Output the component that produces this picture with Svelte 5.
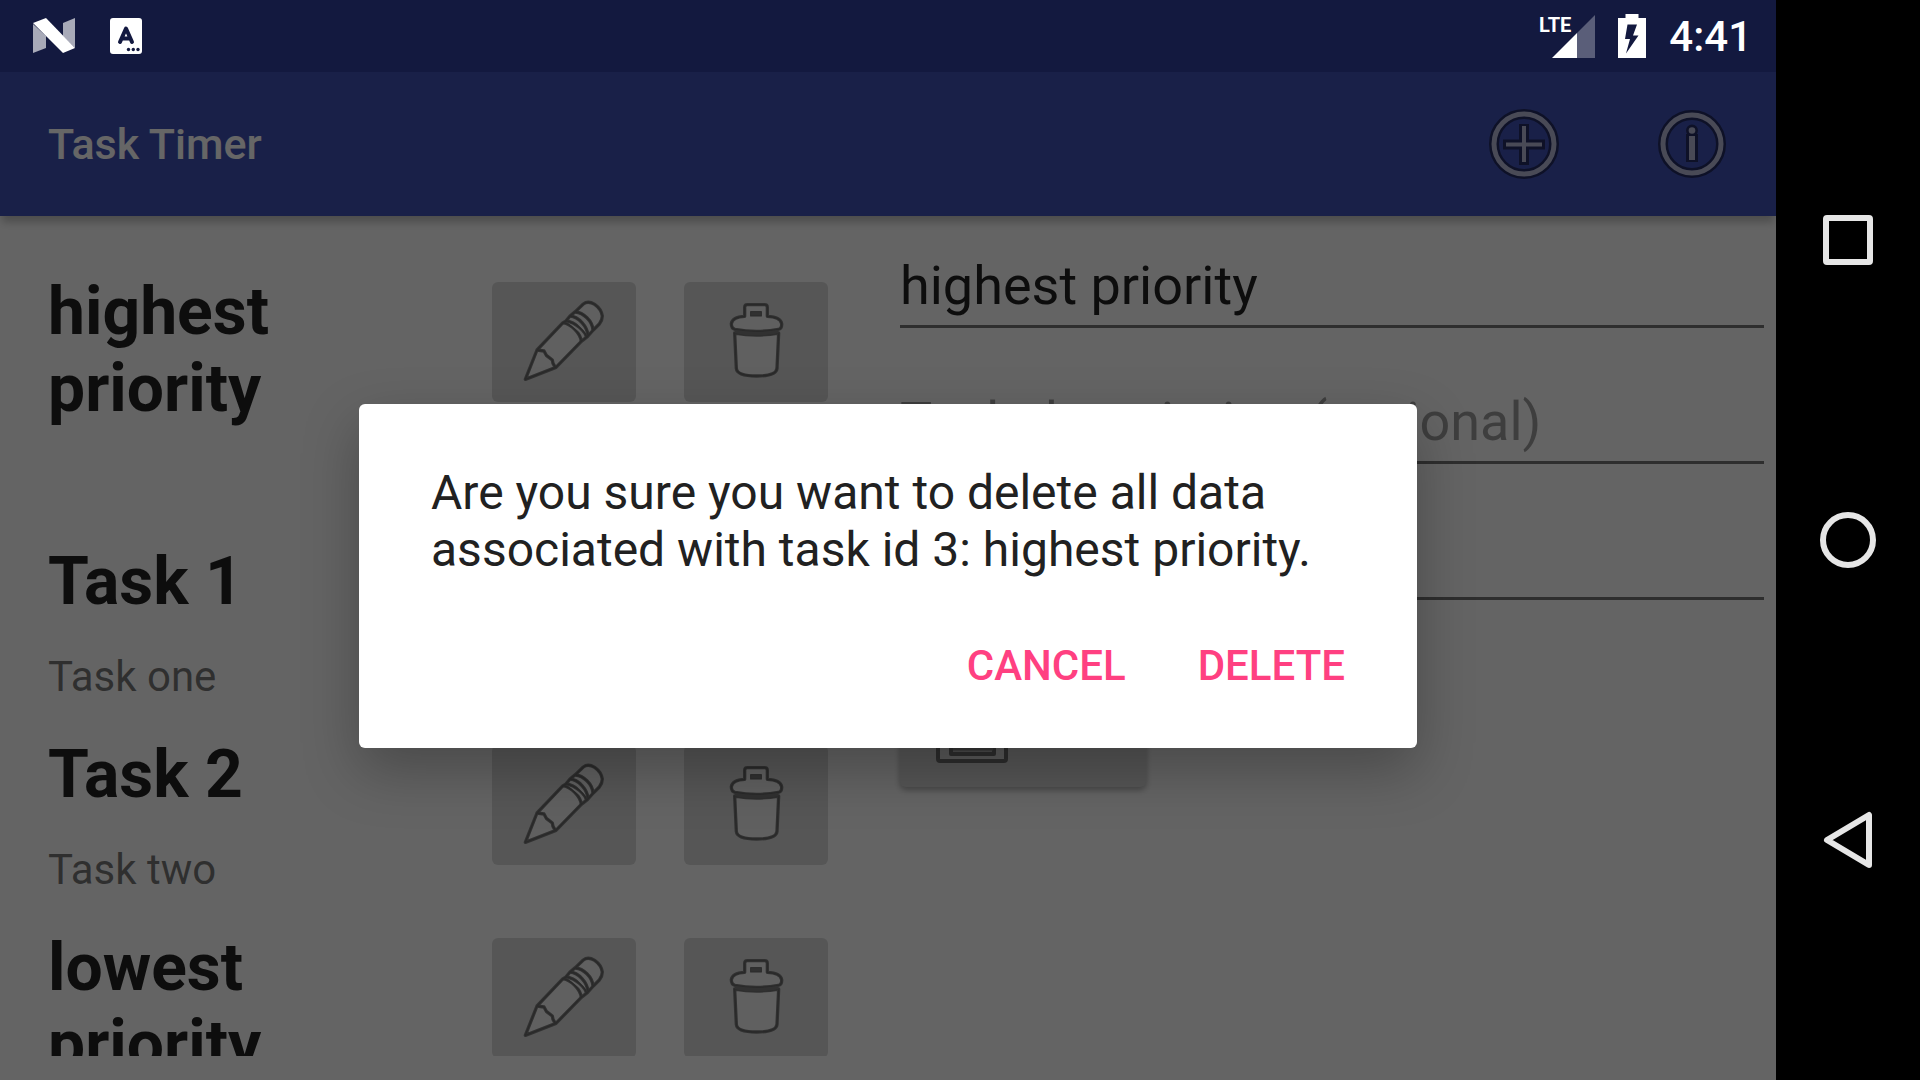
<script>
  const tasks = [
    { name: 'highest priority', description: '' },
    { name: 'Task 1', description: 'Task one' },
    { name: 'Task 2', description: 'Task two' },
    { name: 'lowest priority', description: '' }
  ];

  let name = $state('highest priority');
  let description = $state('');
  let sortOrder = $state('');

  const pencil = [
    'M166 358 201 270 279 188 287 184 300 168 316 155 340 132Q354 121 374 133 394 147 397 168 397 180 388 192L370 210 352 230 334 244 258 322Z',
    'M279 188C305 193 331 220 334 244',
    'M287 182C318 188 347 214 350 234',
    'M300 168C326 170 352 200 354 226',
    'M316 156C340 158 367 182 369 210',
    'M201 270 222 273 229 286 247 300 249 310 256 322'
  ];
  const bin = [
    'M794 219 799 325Q801 348 860 348 919 348 921 325L926 219Q860 231 794 219Z',
    'M784 191Q787 171 824 169V142Q824 134 832 134H884Q892 134 892 142V169Q932 171 935 191 936 207 925 208 860 220 795 208 784 205 784 191Z'
  ];
</script>

{#snippet outlined(paths, viewBox)}
  <svg class="row-icon" {viewBox} aria-hidden="true">
    {#each paths as d}
      <path {d} fill="#f1f1f1" stroke="#7c7c7c" stroke-width="10" stroke-linejoin="round" />
    {/each}
    {#each paths as d}
      <path {d} fill="none" stroke="#686868" stroke-width="4" stroke-linejoin="round" />
    {/each}
    {#if paths === bin}
      <path d="M795 215Q860 228 925 215" fill="none" stroke="#7c7c7c" stroke-width="10" />
      <rect x="842" y="155" width="32" height="13" fill="#7c7c7c" stroke="#686868" stroke-width="3" />
    {/if}
  </svg>
{/snippet}

<div class="device">
  <div class="screen">
    <header class="status">
      <div class="status-group">
        <svg width="42" height="36" viewBox="0 0 42 36" aria-hidden="true">
          <path d="M0 6 13 18V30L0 35Z" fill="#fff" opacity=".63" />
          <path d="M42 0V30L30 18V5Z" fill="#fff" opacity=".63" />
          <path d="M0 5 13 0 42 30 30 35Z" fill="#fff" />
        </svg>
        <svg width="32" height="36" viewBox="0 0 32 36" aria-hidden="true">
          <rect width="32" height="36" rx="3" fill="#fff" />
          <path d="M10 24 16 10.500 22 24M12 20.500H20" fill="none" stroke="#131940" stroke-width="4" stroke-linecap="round" stroke-linejoin="round" />
          <g fill="#131940"><circle cx="18.500" cy="31.500" r="1.700" /><circle cx="23.300" cy="31.500" r="1.700" /><circle cx="28" cy="31.500" r="1.700" /></g>
        </svg>
      </div>
      <div class="status-group status-right">
        <div class="signal">
          <span class="lte">LTE</span>
          <svg width="43" height="43" viewBox="0 0 43 43" aria-hidden="true">
            <path d="M43 0V43H25V18Z" fill="#fff" opacity=".3" />
            <path d="M0 43 25 18V43Z" fill="#fff" />
          </svg>
        </div>
        <svg width="28" height="44" viewBox="0 0 28 44" aria-hidden="true">
          <path fill="#fff" fill-rule="evenodd" d="M7.500 0H20.500V4H28V44H0V4H7.500ZM9.500 10.500 7 25H12L8 39.500 20.500 21.500H15L19 10.500Z" />
        </svg>
        <time>4:41</time>
      </div>
    </header>

    <header class="toolbar">
      <h1>Task Timer</h1>
      <button class="action" aria-label="Add task">
        <svg width="72" height="72" viewBox="-36 -36 72 72" fill="none" aria-hidden="true">
          <g stroke="#232b62" stroke-width="10"><circle r="30" /><path d="M0-20V21M-21 .5H21" stroke-linejoin="round" /></g>
          <g stroke="#b6b8d8"><circle r="30" stroke-width="5" /><path d="M0-18V18M-18 .5H18" stroke-width="4" /></g>
        </svg>
      </button>
      <button class="action" aria-label="About">
        <svg width="72" height="72" viewBox="-36 -36 72 72" fill="none" aria-hidden="true">
          <g stroke="#232b62" stroke-width="10"><circle r="29" /><path d="M0-10V18" stroke-width="12" /><circle cy="-13.500" r="2" stroke-width="8" /></g>
          <circle r="29" stroke="#b6b8d8" stroke-width="5" />
          <path d="M0-8V16" stroke="#b6b8d8" stroke-width="6" />
          <circle cy="-13.500" r="3.300" fill="#b6b8d8" />
        </svg>
      </button>
    </header>

    <main>
      <section class="list-pane">
        <ul>
          {#each tasks as task}
            <li>
              <div class="texts">
                <h2>{task.name}</h2>
                <p>{task.description}</p>
              </div>
              <button class="row-button" aria-label="Edit {task.name}">{@render outlined(pencil, '138 102 288 288')}</button>
              <button class="row-button" aria-label="Delete {task.name}">{@render outlined(bin, '714 102 288 288')}</button>
            </li>
          {/each}
        </ul>
      </section>

      <form onsubmit={(e) => e.preventDefault()}>
        <input aria-label="Task name" bind:value={name} />
        <input aria-label="Task description" placeholder="Task description (optional)" bind:value={description} />
        <input aria-label="Sort order" bind:value={sortOrder} />
        <button class="save" type="submit" aria-label="Save">
          <svg width="96" height="96" viewBox="0 0 96 96" aria-hidden="true">
            <g stroke-linejoin="round">
              <path d="M14 18Q14 16 16 16H74L82 24V82Q82 84 80 84H16Q14 84 14 82Z" fill="#e0e0e0" stroke="#727272" stroke-width="4" />
              <path d="M27 54H70V77H27Z" fill="#bcbcbc" stroke="#727272" stroke-width="4" />
              <path d="M30 18H66V40H30Z" fill="#d6d7d7" stroke="#727272" stroke-width="4" />
              <path d="M29 72H69" stroke="#858585" stroke-width="3" />
            </g>
          </svg>
        </button>
      </form>
    </main>

    <div class="scrim">
      <div class="dialog" role="alertdialog" aria-modal="true" aria-labelledby="message">
        <p id="message">Are you sure you want to delete all data associated with task id 3: highest priority.</p>
        <div class="dialog-actions">
          <button>CANCEL</button>
          <button>DELETE</button>
        </div>
      </div>
    </div>
  </div>

  <nav aria-label="System">
    <button aria-label="Recent apps">
      <svg width="60" height="60" viewBox="-30 -30 60 60" aria-hidden="true"><rect x="-22" y="-22" width="44" height="44" rx="1" /></svg>
    </button>
    <button aria-label="Home">
      <svg width="60" height="60" viewBox="-30 -30 60 60" aria-hidden="true"><circle r="25" /></svg>
    </button>
    <button aria-label="Back">
      <svg width="60" height="60" viewBox="-30 -30 60 60" aria-hidden="true"><path d="M21-25V25L-21 0Z" /></svg>
    </button>
  </nav>
</div>

<style>
  :global(body) {
    margin: 0;
    background: #000;
    font-family: Roboto, 'Liberation Sans', sans-serif;
  }
  .device, .device * { box-sizing: border-box; }
  h1, h2, p, ul { margin: 0; padding: 0; }
  button {
    border: 0;
    padding: 0;
    background: none;
    font: inherit;
    cursor: pointer;
  }
  svg { display: block; flex: none; }

  .device {
    display: flex;
    height: 100vh;
    overflow: hidden;
  }
  .screen {
    position: relative;
    display: flex;
    flex: 1;
    flex-direction: column;
    min-width: 0;
    background: #fafafa;
  }

  .status {
    display: flex;
    flex: none;
    align-items: center;
    justify-content: space-between;
    height: 72px;
    padding: 0 24px 0 33px;
    background: #303f9f;
  }
  .status-group {
    position: relative;
    z-index: 2;
    display: flex;
    align-items: center;
    gap: 35px;
  }
  .status-right { gap: 23px; color: #fff; }
  .signal {
    display: flex;
    align-items: flex-start;
    position: relative;
  }
  .lte {
    position: absolute;
    right: 24px;
    top: 0;
    font: bold 20px/20px 'Liberation Sans Narrow', Roboto, sans-serif;
  }
  time {
    font-size: 42px;
    font-weight: 500;
    line-height: 49px;
  }

  .toolbar {
    position: relative;
    display: flex;
    flex: none;
    align-items: center;
    height: 144px;
    padding-left: 48px;
    background: #3f51b5;
    box-shadow: 0 8px 8px -2px rgba(0, 0, 0, 0.24);
  }
  h1 {
    flex: 1;
    color: #fff;
    font-size: 43px;
    font-weight: 500;
    line-height: 51px;
  }
  .action {
    display: flex;
    align-items: center;
    justify-content: center;
    width: 168px;
    height: 144px;
  }

  main {
    display: grid;
    flex: 1;
    grid-template-columns: 1fr 1fr;
    min-height: 0;
  }
  .list-pane {
    min-height: 0;
    padding: 24px 60px 24px 48px;
  }
  ul {
    height: 100%;
    overflow: hidden;
    list-style: none;
  }
  li {
    display: flex;
    align-items: flex-start;
    gap: 48px;
    padding: 33px 0 2px;
  }
  .texts { flex: 1; }
  h2 {
    color: rgba(0, 0, 0, 0.87);
    font-size: 66px;
    font-weight: 700;
    line-height: 77px;
  }
  .texts p {
    min-height: 49px;
    margin-top: 32px;
    color: rgba(0, 0, 0, 0.54);
    font-size: 42px;
    line-height: 49px;
  }
  .row-button {
    display: flex;
    align-items: center;
    justify-content: center;
    width: 144px;
    height: 120px;
    margin-top: 9px;
    border-radius: 6px;
    background: #d6d7d7;
  }
  .row-icon { width: 96px; height: 96px; }

  form {
    display: flex;
    flex-direction: column;
    gap: 62px;
    padding: 38px 12px 0;
  }
  input {
    width: 100%;
    height: 74px;
    padding: 0 0 8px;
    border: 0;
    border-bottom: 3px solid #737373;
    border-radius: 0;
    outline: 0;
    background: none;
    color: rgba(0, 0, 0, 0.87);
    font: 54px/63px Roboto, 'Liberation Sans', sans-serif;
  }
  input::placeholder { color: rgba(0, 0, 0, 0.38); opacity: 1; }
  .save {
    display: flex;
    align-items: center;
    width: 246px;
    height: 125px;
    padding-left: 24px;
    border-radius: 6px;
    background: #d6d7d7;
    box-shadow: 0 3px 6px rgba(0, 0, 0, 0.3);
  }

  .scrim {
    position: absolute;
    inset: 0;
    z-index: 1;
    display: flex;
    align-items: center;
    justify-content: center;
    padding-top: 72px;
    background: rgba(0, 0, 0, 0.6);
  }
  .dialog {
    width: 60%;
    max-width: 1058px;
    padding: 60px 48px 46px 72px;
    border-radius: 6px;
    background: #fff;
    box-shadow: 0 22px 56px rgba(0, 0, 0, 0.27);
  }
  .dialog p {
    padding-right: 24px;
    color: #212121;
    font-size: 48px;
    line-height: 57px;
  }
  .dialog-actions {
    display: flex;
    justify-content: flex-end;
    gap: 24px;
    margin-top: 51px;
  }
  .dialog-actions button {
    padding: 12px 24px;
    color: #ff4081;
    font-size: 42px;
    font-weight: 500;
    line-height: 49px;
  }

  nav {
    display: flex;
    flex: none;
    flex-direction: column;
    width: 144px;
    padding: 90px 0;
    background: #000;
  }
  nav button {
    display: flex;
    flex: 1;
    align-items: center;
    justify-content: center;
  }
  nav svg {
    fill: none;
    stroke: #e6e6e6;
    stroke-width: 6px;
    stroke-linejoin: round;
  }
</style>
